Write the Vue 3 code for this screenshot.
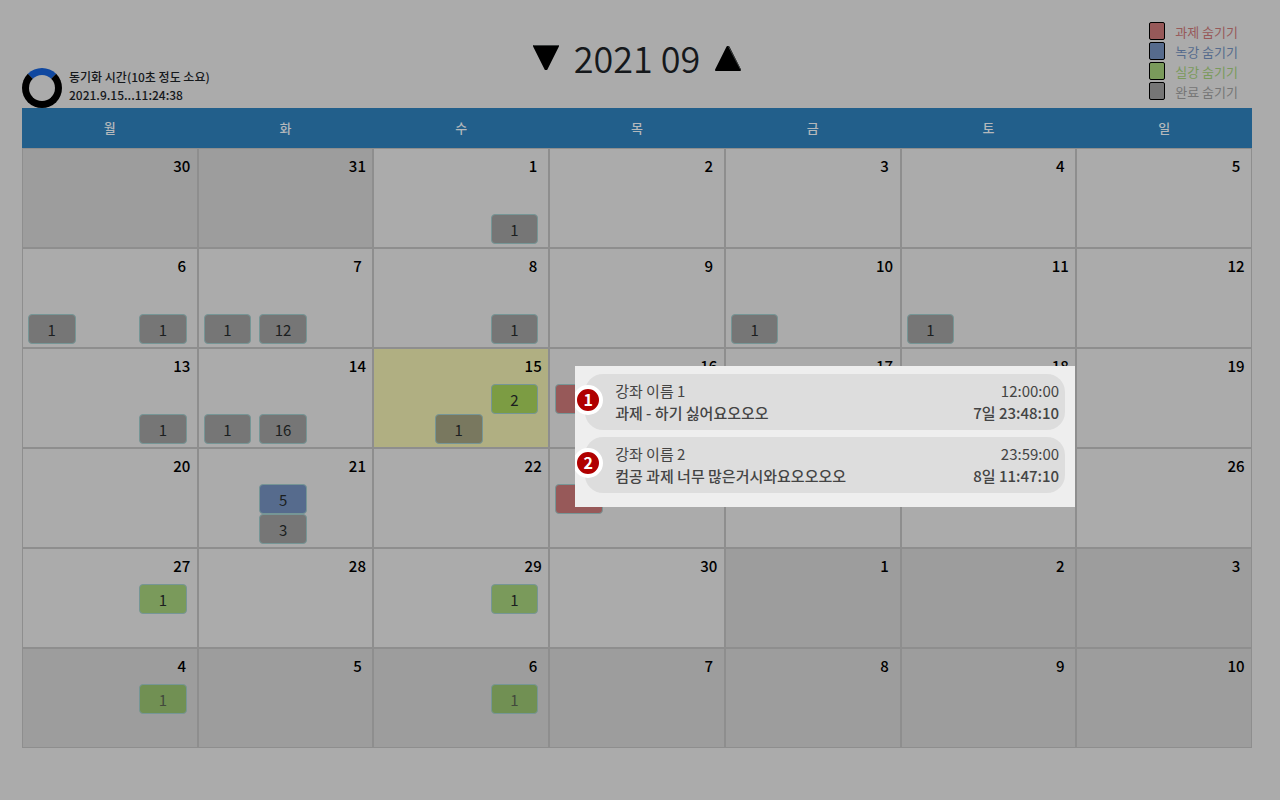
<script setup>
const weekdays = ['월', '화', '수', '목', '금', '토', '일']

const filters = [
  { kind: 'task', label: '과제 숨기기' },
  { kind: 'video', label: '녹강 숨기기' },
  { kind: 'live', label: '실강 숨기기' },
  { kind: 'done', label: '완료 숨기기' },
]

// slot: column 1-3 inside the day, row: 1 = upcoming, 2 = finished
const ev = (slot, row, kind, count) => ({ slot, row, kind, count })

const events = {
  2: [ev(3, 2, 'done', 1)],
  7: [ev(1, 2, 'done', 1), ev(3, 2, 'done', 1)],
  8: [ev(1, 2, 'done', 1), ev(2, 2, 'done', 12)],
  9: [ev(3, 2, 'done', 1)],
  11: [ev(1, 2, 'done', 1)],
  12: [ev(1, 2, 'done', 1)],
  14: [ev(3, 2, 'done', 1)],
  15: [ev(1, 2, 'done', 1), ev(2, 2, 'done', 16)],
  16: [ev(3, 1, 'live', 2), ev(2, 2, 'done', 1)],
  17: [ev(1, 1, 'task', 2)],
  22: [ev(2, 1, 'video', 5), ev(2, 2, 'done', 3)],
  24: [ev(1, 1, 'task', 1)],
  28: [ev(3, 1, 'live', 1)],
  30: [ev(3, 1, 'live', 1)],
  35: [ev(3, 1, 'live', 1)],
  37: [ev(3, 1, 'live', 1)],
}

const weeks = Array.from({ length: 6 }, (_, w) =>
  Array.from({ length: 7 }, (_, d) => {
    const i = w * 7 + d
    return {
      date: new Date(2021, 7, 30 + i).getDate(),
      outside: i < 2 || i > 31,
      today: i === 16,
      open: i === 17,
      events: events[i] || [],
    }
  })
)

const details = [
  { course: '강좌 이름 1', title: '과제 - 하기 싫어요오오오', time: '12:00:00', left: '7일 23:48:10' },
  { course: '강좌 이름 2', title: '컴공 과제 너무 많은거시와요오오오오', time: '23:59:00', left: '8일 11:47:10' },
]
</script>

<template>
  <main class="page">
    <header class="top">
      <div class="sync">
        <button class="spinner" type="button" aria-label="동기화"></button>
        <p>동기화 시간(10초 정도 소요)<br />2021.9.15...11:24:38</p>
      </div>
      <div class="month">
        <button type="button" aria-label="이전 달">
          <svg width="28" height="28" viewBox="0 0 28 28">
            <path d="M2 2H26L14.500 25H13.500Z" stroke="#000" stroke-width="2" stroke-linejoin="round" />
            <path d="M1.500 1.500H26.500" stroke="#3c4040" stroke-width="1" />
          </svg>
        </button>
        <h1>2021 09</h1>
        <button type="button" aria-label="다음 달">
          <svg width="28" height="28" viewBox="0 0 28 28">
            <path d="M2 26H26L14.500 3H13.500Z" stroke="#000" stroke-width="2" stroke-linejoin="round" />
            <path d="M14.500 2.500L26.500 25.500" fill="none" stroke="#3c4040" stroke-width="1" />
          </svg>
        </button>
      </div>
      <div class="filters">
        <label v-for="f in filters" :key="f.kind" :class="f.kind">
          <input type="checkbox" /><span>{{ f.label }}</span>
        </label>
      </div>
    </header>

    <table class="calendar">
      <thead>
        <tr>
          <th v-for="d in weekdays" :key="d" scope="col">{{ d }}</th>
        </tr>
      </thead>
      <tbody>
        <tr v-for="(week, w) in weeks" :key="w">
          <td v-for="(day, d) in week" :key="d" :class="{ outside: day.outside, today: day.today }">
            <span class="date">{{ day.date }}</span>
            <div class="slots">
              <button
                v-for="(e, k) in day.events"
                :key="k"
                type="button"
                :class="['event', e.kind, 'slot-' + e.slot, 'row-' + e.row]"
              >{{ e.count }}</button>
            </div>
            <ol v-if="day.open" class="popup">
              <li v-for="(item, n) in details" :key="n">
                <b class="badge">{{ n + 1 }}</b>
                <div class="line"><span>{{ item.course }}</span><span>{{ item.time }}</span></div>
                <div class="line strong"><span>{{ item.title }}</span><span>{{ item.left }}</span></div>
              </li>
            </ol>
          </td>
        </tr>
      </tbody>
    </table>
  </main>
</template>

<style>
html {
  background: #ababab;
}
</style>

<style scoped>
.page {
  padding: 0 28px 52px 22px;
  font-family: "Noto Sans CJK KR", "Noto Sans", sans-serif;
  color: #000;
}
button {
  font-family: inherit;
  cursor: pointer;
}
.top {
  display: grid;
  grid-template-columns: 1fr auto 1fr;
  min-height: 108px;
}
.sync {
  display: flex;
  align-items: center;
  align-self: end;
  gap: 7px;
}
.sync p {
  margin: 0;
  padding-bottom: 4px;
  font-size: 12px;
  line-height: 18px;
  font-weight: 500;
  color: #15181b;
}
.spinner {
  box-sizing: border-box;
  width: 40px;
  height: 40px;
  padding: 0;
  background: none;
  border: 7px solid #000;
  border-top-color: #1048a0;
  border-radius: 50%;
}
.month {
  display: flex;
  align-items: center;
  gap: 14px;
  padding-top: 8px;
}
.month button {
  display: flex;
  padding: 0;
  border: 0;
  background: none;
}
.month h1 {
  margin: 0;
  padding-bottom: 2px;
  font-size: 36px;
  line-height: 52px;
  font-weight: 350;
  color: #15181b;
}
.filters {
  justify-self: end;
  padding: 22px 14px 0 0;
}
.filters label {
  display: flex;
  align-items: center;
  gap: 10px;
  height: 20px;
  font-size: 13px;
  line-height: 20px;
}
.filters input {
  appearance: none;
  box-sizing: border-box;
  width: 16px;
  height: 18px;
  margin: 0 0 2px;
  border: 1px solid #000;
  border-radius: 2px;
  color: inherit;
  background: currentColor;
}
.filters .task { color: #975959; }
.filters .video { color: #566b8d; }
.filters .live { color: #7a9a5b; }
.filters .done { color: #767676; }

.calendar,
.calendar thead,
.calendar tbody {
  display: block;
}
.calendar tr {
  display: grid;
  grid-template-columns: repeat(7, 1fr);
}
th {
  padding: 0;
  background: #225f8b;
  color: #b4b8bb;
  font-size: 13px;
  line-height: 40px;
  font-weight: 500;
}
td {
  position: relative;
  box-sizing: border-box;
  min-height: 100px;
  padding: 0 6px 3px 1px;
  border: 1px solid #8e8e8e;
}
td.outside {
  background: #9d9d9d;
}
td.today {
  background: #b0af82;
}
.date {
  display: block;
  width: 30px;
  margin: 0 -6px 0 auto;
  padding-bottom: 2px;
  text-align: center;
  font-size: 15px;
  line-height: 33px;
  font-weight: 500;
}
.slots {
  display: grid;
  grid-template-columns: repeat(3, 1fr);
  grid-template-rows: 30px 30px;
}
.event {
  box-sizing: border-box;
  margin: 0 4px;
  padding: 2px 0 0;
  border: 1px solid #769696;
  border-radius: 4px;
  font-size: 15px;
  line-height: 26px;
  font-weight: 400;
  color: #1b1e20;
}
.event.task { background: #975959; color: #975959; }
.event.video { background: #566b8d; }
.event.live { background: #7a9a5b; }
.event.done { background: #767676; }
.today .event.live { background: #7c9c43; }
.today .event.done { background: #79785f; }
.outside .event { background: #719053; color: #42493c; }
.slot-1 { grid-column: 1; }
.slot-2 { grid-column: 2; }
.slot-3 { grid-column: 3; }
.row-1 { grid-row: 1; }
.row-2 { grid-row: 2; }

.popup {
  position: absolute;
  z-index: 2;
  top: 17px;
  left: 25px;
  box-sizing: border-box;
  width: 500px;
  margin: 0;
  padding: 8px 10px 14px;
  display: grid;
  gap: 7px;
  list-style: none;
  overflow: hidden;
  background: #eee;
  color: #444;
  font-size: 15px;
  line-height: 22px;
}
.popup li {
  position: relative;
  padding: 6px 6px 6px 30px;
  border-radius: 18px;
  background: #ddd;
}
.line {
  display: flex;
  justify-content: space-between;
  font-weight: 400;
}
.line.strong {
  font-weight: 500;
}
.badge {
  position: absolute;
  top: 11px;
  left: -12px;
  width: 22px;
  height: 22px;
  border: 4px solid #fff;
  border-radius: 50%;
  background: #b00000;
  color: #fff;
  font-size: 16px;
  line-height: 20px;
  text-align: center;
}
</style>
